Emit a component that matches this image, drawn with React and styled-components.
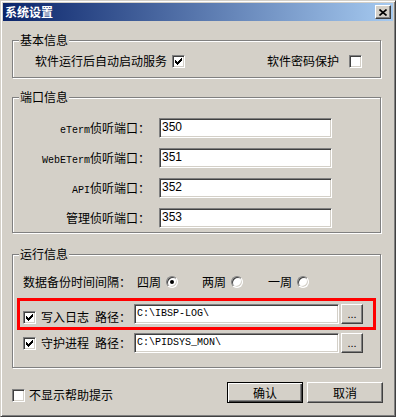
import React from "react";
import styled, { createGlobalStyle } from "styled-components";

const GlobalStyle = createGlobalStyle`
  html, body {
    margin: 0;
    padding: 0;
    background: #d4d0c8;
  }
  * {
    box-sizing: border-box;
  }
`;

const CJK = `"Noto Sans CJK SC", "Liberation Sans", sans-serif`;

const Window = styled.div`
  width: 396px;
  height: 417px;
  padding: 2px;
  background: #d4d0c8;
  border: 1px solid;
  border-color: #d4d0c8 #404040 #404040 #d4d0c8;
  box-shadow: inset 1px 1px 0 #fff, inset -1px -1px 0 #808080;
  font-family: ${CJK};
  font-size: 12px;
  color: #000;
`;

const TitleBar = styled.div`
  height: 18px;
  display: flex;
  align-items: center;
  justify-content: space-between;
  padding: 0 2px;
  background: linear-gradient(to right, #0a246a, #a6caf0);
`;

const Title = styled.span`
  color: #fff;
  font-weight: bold;
  font-size: 12px;
  line-height: 18px;
`;

const CloseButton = styled.div`
  width: 16px;
  height: 14px;
  display: flex;
  align-items: center;
  justify-content: center;
  background: #d4d0c8;
  border: 1px solid;
  border-color: #fff #404040 #404040 #fff;
  box-shadow: inset -1px -1px 0 #808080;
`;

const Body = styled.div`
  padding-left: 9px;
`;

const Group = styled.div`
  position: relative;
  width: 369px;
  height: ${(p) => p.$h}px;
  margin-top: ${(p) => p.$mt}px;
  padding-top: ${(p) => p.$pt}px;
  border: 1px solid #808080;
  box-shadow: inset 1px 1px 0 #fff, 1px 1px 0 #fff;
`;

const Legend = styled.span`
  position: absolute;
  top: -8px;
  left: 6px;
  padding: 0 1px;
  line-height: 14px;
  background: #d4d0c8;
`;

const OptionRow = styled.div`
  display: flex;
  justify-content: space-between;
  align-items: center;
  padding: 0 18px 0 22px;
`;

const Item = styled.label`
  display: flex;
  align-items: center;
  gap: ${(p) => p.$gap}px;
  line-height: 14px;
`;

const Box = styled.span`
  width: 13px;
  height: 13px;
  flex: none;
  display: flex;
  align-items: center;
  justify-content: center;
  background: #fff;
  border: 1px solid;
  border-color: #808080 #fff #fff #808080;
  box-shadow: inset 1px 1px 0 #404040, inset -1px -1px 0 #d4d0c8;
`;

const Check = () => (
  <svg width="7" height="7" viewBox="0 0 7 7" shapeRendering="crispEdges">
    {[2, 3, 4, 3, 2, 1, 0].map((y, x) => (
      <rect key={x} x={x} y={y} width="1" height="3" fill="#000" />
    ))}
  </svg>
);

const CheckBox = ({ checked }) => <Box>{checked && <Check />}</Box>;

const PortGrid = styled.div`
  display: grid;
  grid-template-columns: 137px 173px;
  column-gap: 9px;
  row-gap: 7px;
`;

const PortLabel = styled.span`
  text-align: right;
  line-height: 20px;
  white-space: nowrap;
`;

const Latin = styled.span`
  font-family: "Liberation Mono", monospace;
  font-size: 10px;
`;

const Field = styled.input`
  width: ${(p) => p.$w}px;
  height: 20px;
  margin: 0;
  padding: 0 2px 2px;
  background: #fff;
  border: 1px solid;
  border-color: #808080 #fff #fff #808080;
  box-shadow: inset 1px 1px 0 #404040, inset -1px -1px 0 #d4d0c8;
  font-family: ${(p) => (p.$mono ? `"Liberation Mono", monospace` : `"Liberation Sans", sans-serif`)};
  font-size: ${(p) => (p.$mono ? 10 : 12)}px;
  color: #000;
  outline: none;
`;

const RadioRow = styled.div`
  display: flex;
  align-items: center;
  height: 20px;
  padding-left: 10px;
`;

const RadioLabel = styled.span`
  width: 114px;
  line-height: 14px;
`;

const RadioOption = styled.label`
  width: ${(p) => p.$w}px;
  display: flex;
  align-items: center;
  gap: 5px;
  line-height: 14px;
`;

const Radio = styled.span`
  width: 12px;
  height: 12px;
  flex: none;
  border-radius: 50%;
  display: flex;
  align-items: center;
  justify-content: center;
  background: #fff;
  border: 1px solid;
  border-color: #808080 #fff #fff #808080;
  box-shadow: inset 1px 1px 0 #404040, inset -1px -1px 0 #d4d0c8;

  &::after {
    content: "";
    width: 4px;
    height: 4px;
    border-radius: 50%;
    background: ${(p) => (p.$on ? "#000" : "transparent")};
  }
`;

const PathList = styled.div`
  display: flex;
  flex-direction: column;
  gap: 3px;
  margin: 9px 7px 0;
`;

const PathRow = styled.div`
  display: flex;
  align-items: center;
  padding: 3px;
  outline: ${(p) => (p.$highlight ? "3px solid #ff0000" : "none")};
`;

const PathLead = styled.div`
  width: 111px;
  display: flex;
  align-items: center;
  gap: 5px;
  padding-top: ${(p) => p.$drop}px;
  line-height: 14px;
`;

const LeadText = styled.span`
  display: flex;
  gap: 6px;
`;

const Browse = styled.div`
  width: 22px;
  height: 20px;
  margin-left: 2px;
  display: flex;
  align-items: flex-end;
  justify-content: center;
  padding-bottom: 3px;
  background: #d4d0c8;
  border: 1px solid;
  border-color: #fff #404040 #404040 #fff;
  box-shadow: inset -1px -1px 0 #808080;
  font-family: "Liberation Sans", sans-serif;
  font-size: 11px;
  line-height: 11px;
`;

const Footer = styled.div`
  width: 371px;
  margin-top: 14px;
  display: flex;
  justify-content: space-between;
  align-items: flex-end;
`;

const FooterCheck = styled.label`
  display: flex;
  align-items: center;
  gap: 4px;
  line-height: 14px;
  margin-bottom: 1px;
`;

const Buttons = styled.div`
  display: flex;
  gap: 4px;
`;

const Button = styled.button`
  width: 76px;
  height: 21px;
  margin: 0;
  padding: 0;
  background: #d4d0c8;
  font-family: ${CJK};
  font-size: 12px;
  line-height: 14px;
  color: #000;
  border: 1px solid;
  border-color: ${(p) => (p.$default ? "#000" : "#fff #404040 #404040 #fff")};
  box-shadow: ${(p) =>
    p.$default
      ? "inset 1px 1px 0 #fff, inset -1px -1px 0 #404040, inset -2px -2px 0 #808080"
      : "inset -1px -1px 0 #808080"};
`;

const ports = [
  { latin: "eTerm", value: "350" },
  { latin: "WebETerm", value: "351" },
  { latin: "API", value: "352" },
  { cjk: "管理", value: "353" },
];

export default function App() {
  return (
    <>
      <GlobalStyle />
      <Window>
        <TitleBar>
          <Title>系统设置</Title>
          <CloseButton>
            <svg width="8" height="7" viewBox="0 0 8 7">
              <path d="M0.5 0.5 L7.5 6.5 M7.5 0.5 L0.5 6.5" stroke="#000" strokeWidth="1.6" />
            </svg>
          </CloseButton>
        </TitleBar>
        <Body>
          <Group $mt={19} $h={38} $pt={13}>
            <Legend>基本信息</Legend>
            <OptionRow>
              <Item $gap={5}>
                软件运行后自动启动服务
                <CheckBox checked />
              </Item>
              <Item $gap={10}>
                软件密码保护
                <CheckBox />
              </Item>
            </OptionRow>
          </Group>

          <Group $mt={19} $h={136} $pt={20}>
            <Legend>端口信息</Legend>
            <PortGrid>
              {ports.map((p) => (
                <React.Fragment key={p.value}>
                  <PortLabel>
                    {p.latin ? <Latin>{p.latin}</Latin> : p.cjk}侦听端口：
                  </PortLabel>
                  <Field $w={173} value={p.value} readOnly />
                </React.Fragment>
              ))}
            </PortGrid>
          </Group>

          <Group $mt={21} $h={114} $pt={17}>
            <Legend>运行信息</Legend>
            <RadioRow>
              <RadioLabel>数据备份时间间隔：</RadioLabel>
              <RadioOption $w={65}>
                四周
                <Radio $on />
              </RadioOption>
              <RadioOption $w={66}>
                两周
                <Radio />
              </RadioOption>
              <RadioOption $w={60}>
                一周
                <Radio />
              </RadioOption>
            </RadioRow>
            <PathList>
              <PathRow $highlight>
                <PathLead $drop={6}>
                  <CheckBox checked />
                  <LeadText>
                    <span>写入日志</span>
                    <span>路径：</span>
                  </LeadText>
                </PathLead>
                <Field $w={205} $mono value="C:\IBSP-LOG\" readOnly />
                <Browse>...</Browse>
              </PathRow>
              <PathRow>
                <PathLead $drop={0}>
                  <CheckBox checked />
                  <LeadText>
                    <span>守护进程</span>
                    <span>路径：</span>
                  </LeadText>
                </PathLead>
                <Field $w={205} $mono value="C:\PIDSYS_MON\" readOnly />
                <Browse>...</Browse>
              </PathRow>
            </PathList>
          </Group>

          <Footer>
            <FooterCheck>
              <CheckBox />
              不显示帮助提示
            </FooterCheck>
            <Buttons>
              <Button $default>确认</Button>
              <Button>取消</Button>
            </Buttons>
          </Footer>
        </Body>
      </Window>
    </>
  );
}
